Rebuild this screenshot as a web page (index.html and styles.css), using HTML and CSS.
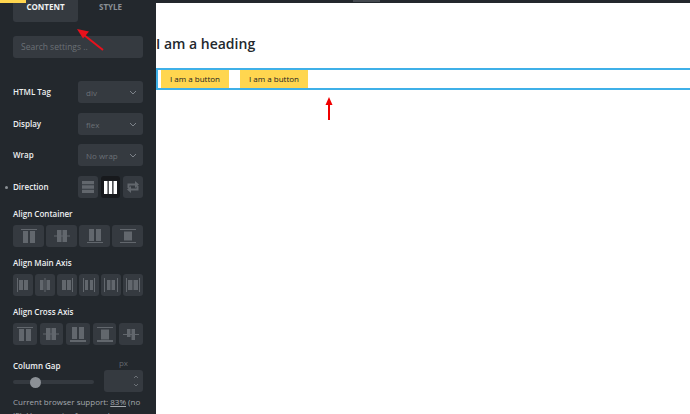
FILE: index.html
```html
<!DOCTYPE html>
<html lang="en">
<head>
<meta charset="utf-8">
<title>Builder</title>
<link rel="stylesheet" href="styles.css">
</head>
<body>
<div class="app">
  <aside class="panel">
    <div class="tabs">
      <div class="tab active">CONTENT</div>
      <div class="tab">STYLE</div>
    </div>
    <div class="search">Search settings ..</div>
    <div class="row first"><span class="label">HTML Tag</span><div class="select">div<svg width="8" height="5" viewBox="0 0 8 5"><path d="M1 1l3 3 3-3" fill="none" stroke="#7d838a" stroke-width="1"/></svg></div></div>
    <div class="row"><span class="label">Display</span><div class="select">flex<svg width="8" height="5" viewBox="0 0 8 5"><path d="M1 1l3 3 3-3" fill="none" stroke="#7d838a" stroke-width="1"/></svg></div></div>
    <div class="row tight"><span class="label">Wrap</span><div class="select">No wrap<svg width="8" height="5" viewBox="0 0 8 5"><path d="M1 1l3 3 3-3" fill="none" stroke="#7d838a" stroke-width="1"/></svg></div></div>
    <div class="row dir">
      <span class="label">Direction</span>
      <div class="dirbtns">
        <div class="ib"><svg width="12" height="12" viewBox="0 0 12 12"><path d="M0 0h12v3.300H0zM0 4.350h12v3.300H0zM0 8.700h12V12H0z" fill="#62676d"/></svg></div>
        <div class="ib on"><svg width="13" height="13" viewBox="0 0 13 13"><path d="M0 0h3.500v13H0zM4.750 0h3.500v13h-3.500zM9.500 0H13v13H9.500z" fill="#fff"/></svg></div>
        <div class="ib"><svg width="12" height="12" viewBox="0 0 12 12"><path d="M1.500 7V3.500h7M10.500 5v3.500h-7" fill="none" stroke="#62676d" stroke-width="2"/><path d="M8 0l4 3.500L8 7zM4 5L0 8.500 4 12z" fill="#62676d"/></svg></div>
      </div>
    </div>
    <div class="heading h1">Align Container</div>
    <div class="btnrow g2">
      <div class="ib"><svg width="16" height="14" viewBox="0 0 16 14"><path d="M0 0h16v1H0zM2 2h5v12H2zM9 2h5v12H9z" fill="#62676d"/></svg></div>
      <div class="ib"><svg width="16" height="12" viewBox="0 0 16 12"><path d="M0 5.500h16v1H0zM3 0h4.500v12H3zM8.500 0H13v12H8.500z" fill="#62676d"/></svg></div>
      <div class="ib"><svg width="16" height="14" viewBox="0 0 16 14"><path d="M0 13h16v1H0zM2 0h5v12H2zM9 0h5v12H9z" fill="#62676d"/></svg></div>
      <div class="ib"><svg width="16" height="14" viewBox="0 0 16 14"><path d="M0 0h16v1H0zM0 13h16v1H0zM4 2.500h8v9H4z" fill="#62676d"/></svg></div>
    </div>
    <div class="heading h2">Align Main Axis</div>
    <div class="btnrow g6">
      <div class="ib"><svg width="12" height="14" viewBox="0 0 12 14"><path d="M0 0h1v14H0zM2 2h4v10H2zM7 2h4v10H7z" fill="#62676d"/></svg></div>
      <div class="ib"><svg width="12" height="14" viewBox="0 0 12 14"><path d="M5.500 0h1v14h-1zM1 2h3.500v10H1zM7.500 2H11v10H7.500z" fill="#62676d"/></svg></div>
      <div class="ib"><svg width="12" height="14" viewBox="0 0 12 14"><path d="M11 0h1v14h-1zM1 2h4v10H1zM6 2h4v10H6z" fill="#62676d"/></svg></div>
      <div class="ib"><svg width="12" height="14" viewBox="0 0 12 14"><path d="M0 0h1v14H0zM11 0h1v14h-1zM2 2h3v10H2zM7 2h3v10H7z" fill="#62676d"/></svg></div>
      <div class="ib"><svg width="14" height="14" viewBox="0 0 14 14"><path d="M0 0h1v14H0zM13 0h1v14h-1zM3 2h3.500v10H3zM7.500 2H11v10H7.500z" fill="#62676d"/></svg></div>
      <div class="ib"><svg width="14" height="14" viewBox="0 0 14 14"><path d="M0 0h1v14H0zM13 0h1v14h-1zM2 2h4.500v10H2zM7.500 2H12v10H7.500z" fill="#62676d"/></svg></div>
    </div>
    <div class="heading h2">Align Cross Axis</div>
    <div class="btnrow g5">
      <div class="ib"><svg width="16" height="14" viewBox="0 0 16 14"><path d="M0 0h16v1H0zM2 2h5v12H2zM9 2h5v12H9z" fill="#62676d"/></svg></div>
      <div class="ib"><svg width="16" height="12" viewBox="0 0 16 12"><path d="M0 5.500h16v1H0zM3 0h4.500v12H3zM8.500 0H13v12H8.500z" fill="#62676d"/></svg></div>
      <div class="ib"><svg width="16" height="15" viewBox="0 0 16 15"><path d="M0 13h16v2H0zM2 0h5v12H2zM9 0h5v12H9z" fill="#62676d"/></svg></div>
      <div class="ib"><svg width="16" height="15" viewBox="0 0 16 15"><path d="M0 0h16v1H0zM0 13h16v2H0zM4 2.500h8v10H4z" fill="#62676d"/></svg></div>
      <div class="ib"><svg width="16" height="11" viewBox="0 0 16 11"><path d="M0 5h16v1H0zM4 0h3.500v8H4zM8.500 0H12v11H8.500z" fill="#62676d"/></svg></div>
    </div>
    <div class="gap">
      <div class="gapleft">
        <div class="label">Column Gap</div>
        <div class="slider"><span class="knob"></span></div>
      </div>
      <div class="gapright">
        <div class="unit">px</div>
        <div class="number"><svg width="6" height="14" viewBox="0 0 6 14"><path d="M1 4l2-2 2 2M1 10l2 2 2-2" fill="none" stroke="#6b7076"/></svg></div>
      </div>
    </div>
    <p class="note">Current browser support: <u>83%</u> (no IE). Use margins for max. browser support.</p>
  </aside>
  <main class="canvas">
    <div class="topbar"><span class="toppiece"></span></div>
    <h3 class="title">I am a heading</h3>
    <div class="flexbox">
      <a class="btn">I am a button</a>
      <a class="btn">I am a button</a>
    </div>
  </main>
  <span class="accent"></span>
  <svg class="arrow a1" width="30" height="26" viewBox="0 0 30 26"><path d="M26 25L7 10" stroke="#e8111c" stroke-width="2"/><path d="M0 4l12 2.500-6 7z" fill="#e8111c"/></svg>
  <svg class="arrow a2" width="8" height="23" viewBox="0 0 8 23"><path d="M4 6v17" stroke="#f00000" stroke-width="2"/><path d="M4 0l3.500 8h-7z" fill="#f00000"/></svg>
</div>
</body>
</html>
```
FILE: styles.css
```css
* { box-sizing: border-box; }
html, body { margin: 0; height: 100%; overflow: hidden; }
body { font-family: "Open Sans", "Noto Sans", sans-serif; background: #fff; }
.app { position: relative; display: flex; width: 690px; height: 414px; overflow: hidden; }
.panel { width: 156px; height: 414px; flex: none; background: #23282d; padding: 0 13px; overflow: hidden; color: #fff; }
.tabs { display: flex; height: 22px; }
.tab { width: 65px; height: 22px; border-radius: 0 0 3px 3px; font-size: 8px; font-weight: 700; line-height: 13px; text-align: center; color: #8b9095; }
.tab.active { background: #353a40; color: #f0f2f3; }
.search { margin-top: 14px; height: 22px; border-radius: 3px; background: #353a40; padding-left: 8px; font-size: 8.500px; line-height: 22px; color: #6b7076; }
.row { display: flex; align-items: center; justify-content: space-between; height: 22px; margin-top: 10px; }
.row.first { margin-top: 23px; }
.row.tight { margin-top: 9px; }
.label { font-size: 8px; font-weight: 600; line-height: 12px; color: #eef0f1; }
.select { display: flex; align-items: center; justify-content: space-between; width: 65px; height: 22px; border-radius: 3px; background: #353a40; padding: 0 6px 0 8px; font-size: 8px; color: #6b7076; }
.dir { position: relative; }
.dir::before { content: ""; position: absolute; left: -8px; top: 10px; width: 3px; height: 3px; border-radius: 50%; background: #8b9095; }
.dirbtns { display: flex; gap: 3px; width: 65px; }
.ib { flex: 1 1 0; height: 22px; display: flex; align-items: center; justify-content: center; border-radius: 3px; background: #353a40; }
.ib.on { background: #17191c; }
.heading { font-size: 8px; font-weight: 600; line-height: 12px; color: #eef0f1; }
.h1 { margin-top: 10px; }
.h2 { margin-top: 10px; }
.btnrow { display: flex; margin-top: 5px; }
.g2 { gap: 2px; }
.g6 { gap: 2px; }
.g5 { gap: 3px; }
.gap { display: flex; justify-content: space-between; margin-top: 12px; }
.gapleft { width: 81px; padding-top: 3px; }
.slider { position: relative; height: 4px; margin-top: 8px; border-radius: 2px; background: #353a40; }
.knob { position: absolute; left: 17px; top: -3px; width: 11px; height: 11px; border-radius: 50%; background: #8c9196; }
.gapright { width: 39px; }
.unit { height: 11px; font-size: 8px; line-height: 11px; text-align: center; color: #62676d; }
.number { display: flex; align-items: center; justify-content: flex-end; height: 22px; margin-top: 2px; padding-right: 4px; border-radius: 3px; background: #353a40; }
.note { margin: 3px 0 0; width: 135px; font-size: 8px; line-height: 13px; color: #a3a8ad; }
.canvas { flex: 1; min-width: 0; background: #fff; }
.topbar { position: relative; height: 3px; background: #23282d; }
.toppiece { position: absolute; left: 197px; top: 0; width: 27px; height: 2px; background: #454a50; }
.title { margin: 31px 0 0; font-size: 14px; font-weight: 600; line-height: 20px; color: #23282d; }
.flexbox { display: flex; gap: 11px; height: 22px; margin-top: 14px; padding: 0 0 0 3px; border: solid #3fb0e8; border-width: 2px 0 2px 2px; }
.btn { width: 68px; height: 18px; background: #ffd64f; font-size: 8px; line-height: 18px; text-align: center; color: #222; }
.accent { position: absolute; left: 0; top: 0; width: 26px; height: 3px; background: #ffd64f; }
.arrow { position: absolute; }
.a1 { left: 77px; top: 25px; }
.a2 { left: 325px; top: 97px; }
```
